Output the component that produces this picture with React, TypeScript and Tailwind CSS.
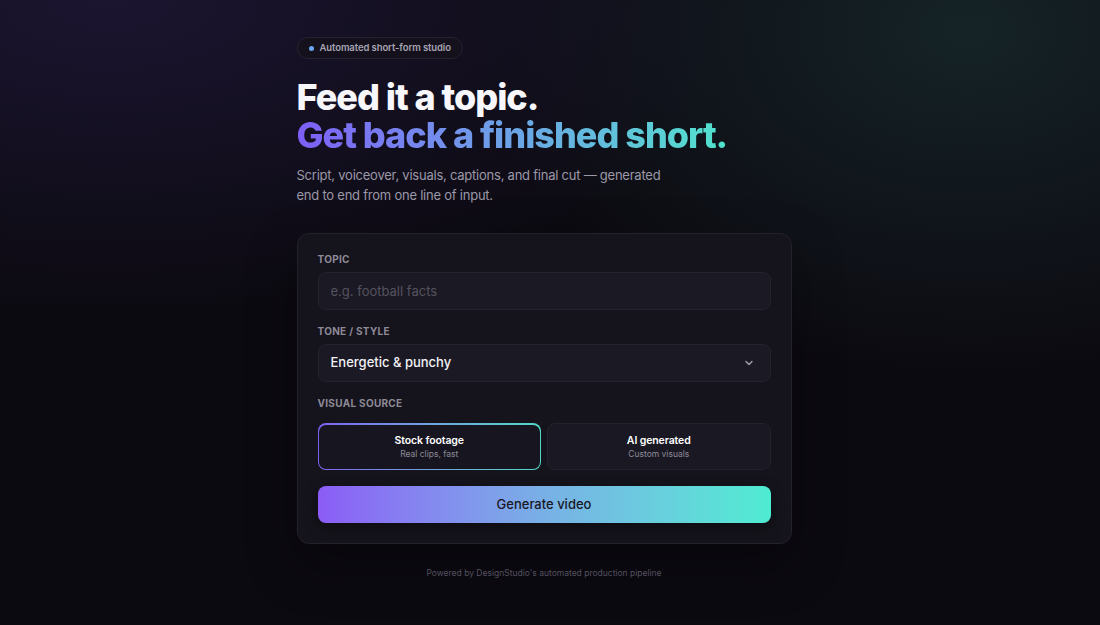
import React, { useState } from 'react';

const sources = [
  { id: 'stock', title: 'Stock footage', sub: 'Real clips, fast' },
  { id: 'ai', title: 'AI generated', sub: 'Custom visuals' },
];

function App() {
  const [source, setSource] = useState('stock');
  const [topic, setTopic] = useState('');

  return (
    <div className="min-h-screen w-full bg-[#0c0a11] bg-[radial-gradient(ellipse_60%_50%_at_10%_0%,#1b1530_0%,transparent_100%),radial-gradient(ellipse_45%_55%_at_88%_5%,#152327_0%,transparent_100%)] pr-[12px] font-['Inter','Liberation_Sans',sans-serif] text-white">
      <div className="mx-auto flex w-[495px] flex-col pt-[37px]">
        <div className="flex h-[22px] w-fit items-center gap-[6px] rounded-full border border-[#25222f] bg-[#14111c] pl-[11px] pr-[11px]">
          <span className="h-[5px] w-[5px] rounded-full bg-[#6aa6f2]" />
          <span className="text-[9.5px] font-semibold tracking-[-0.01em] text-[#a7a4b3]">Automated short-form studio</span>
        </div>

        <h1 className="mt-[19px] text-[36px] font-extrabold leading-[38px] tracking-[-0.028em]">
          <span className="block text-[#f7f6fb]">Feed it a topic.</span>
          <span className="block w-fit bg-gradient-to-r from-[#7d5ef6] via-[#6ba3e6] to-[#4fe3cc] bg-clip-text text-transparent">
            Get back a finished short.
          </span>
        </h1>

        <p className="mt-[11px] max-w-[370px] text-[13px] leading-[20px] tracking-[-0.018em] text-[#9b98a8]">
          Script, voiceover, visuals, captions, and final cut — generated end to end from one line of input.
        </p>

        <div className="mt-[28px] rounded-[12px] border border-[#24212c] bg-[#15131b] px-5 pb-5 pt-[18px] shadow-[0_20px_50px_rgba(0,0,0,0.35)]">
          <label className="block text-[10px] font-bold uppercase leading-[14px] tracking-[0.03em] text-[#8d8a98]">Topic</label>
          <input
            value={topic}
            onChange={(e) => setTopic(e.target.value)}
            placeholder="e.g. football facts"
            className="mt-[6px] h-[38px] w-full rounded-[8px] border border-[#25222e] bg-[#1b1923] px-[12px] text-[13px] text-white outline-none placeholder:text-[#55525f]"
          />

          <label className="mt-[14px] block text-[10px] font-bold uppercase leading-[14px] tracking-[0.03em] text-[#8d8a98]">Tone / Style</label>
          <div className="mt-[6px] flex h-[38px] w-full items-center justify-between rounded-[8px] border border-[#25222e] bg-[#1b1923] px-[12px]">
            <span className="text-[13px] font-medium text-[#f3f2f7]">Energetic &amp; punchy</span>
            <svg width="10" height="10" viewBox="0 0 10 10" fill="none" className="mr-[4px]">
              <path d="M2 3.5L5 6.5L8 3.5" stroke="#a3a0ae" strokeWidth="1.4" strokeLinecap="round" strokeLinejoin="round" />
            </svg>
          </div>

          <label className="mt-[14px] block text-[10px] font-bold uppercase leading-[14px] tracking-[0.03em] text-[#8d8a98]">Visual source</label>
          <div className="mt-[13px] grid grid-cols-2 gap-[6px]">
            {sources.map((s) =>
              source === s.id ? (
                <button
                  key={s.id}
                  onClick={() => setSource(s.id)}
                  className="h-[47px] rounded-[8px] bg-gradient-to-r from-[#7d62f2] to-[#4fd9c5] p-[1.5px]"
                >
                  <div className="flex h-full w-full flex-col items-center justify-center rounded-[7px] bg-[#17151f]">
                    <span className="text-[10.5px] font-semibold leading-[14px] tracking-[-0.01em] text-white">{s.title}</span>
                    <span className="text-[8.5px] leading-[12px] text-[#8e8b99]">{s.sub}</span>
                  </div>
                </button>
              ) : (
                <button
                  key={s.id}
                  onClick={() => setSource(s.id)}
                  className="flex h-[47px] flex-col items-center justify-center rounded-[8px] border border-[#24212c] bg-[#1a1822]"
                >
                  <span className="text-[10.5px] font-semibold leading-[14px] tracking-[-0.01em] text-white">{s.title}</span>
                  <span className="text-[8.5px] leading-[12px] text-[#8e8b99]">{s.sub}</span>
                </button>
              )
            )}
          </div>

          <button className="mt-[16px] h-[37px] w-full rounded-[8px] bg-gradient-to-r from-[#8b5cf6] via-[#78b0e6] to-[#4eecd2] text-[13px] font-medium text-[#1a1725] shadow-[0_4px_14px_rgba(0,0,0,0.35)]">
            Generate video
          </button>
        </div>

        <p className="mt-[23px] text-center text-[8.5px] text-[#54515f]">
          Powered by DesignStudio's automated production pipeline
        </p>
      </div>
    </div>
  );
}

export default App;
